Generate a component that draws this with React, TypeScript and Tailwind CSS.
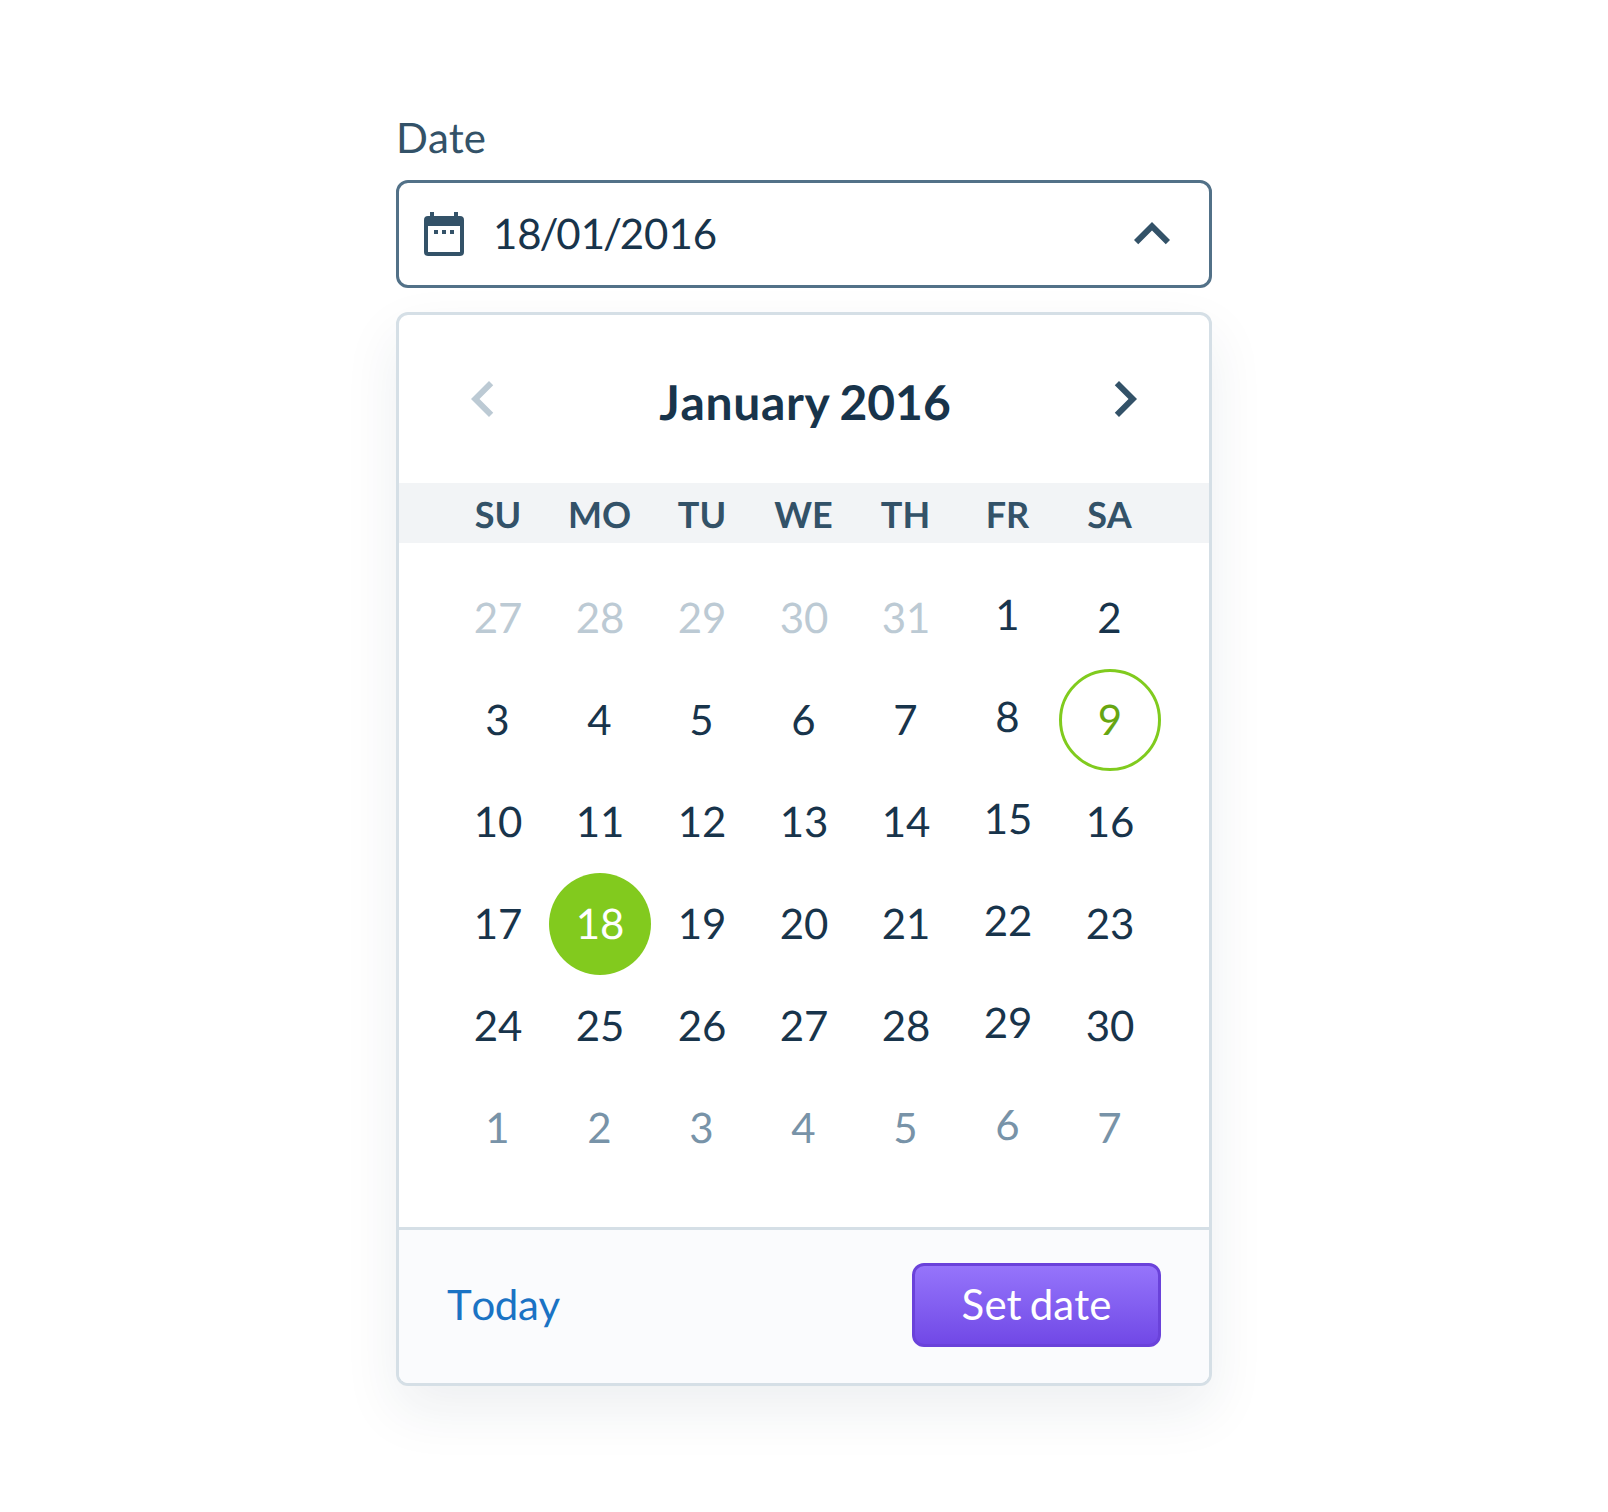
import React from "react";

const WEEKDAYS = ["SU", "MO", "TU", "WE", "TH", "FR", "SA"];

const WEEKS = [
  [27, 28, 29, 30, 31, 1, 2],
  [3, 4, 5, 6, 7, 8, 9],
  [10, 11, 12, 13, 14, 15, 16],
  [17, 18, 19, 20, 21, 22, 23],
  [24, 25, 26, 27, 28, 29, 30],
  [1, 2, 3, 4, 5, 6, 7],
];

function CalendarIcon() {
  return (
    <svg width="40" height="44" viewBox="0 0 40 44" fill="#335268" className="block">
      <path d="M6 0h4v4h20V0h4v4h2a4 4 0 0 1 4 4v32a4 4 0 0 1-4 4H4a4 4 0 0 1-4-4V8a4 4 0 0 1 4-4h2zM4 14v26h32V14z" fillRule="evenodd" />
      <path d="M10 18h4v4h-4zM18 18h4v4h-4zM26 18h4v4h-4z" />
    </svg>
  );
}

const CHEVRONS = {
  up: "M7.41 15.41 12 10.83l4.59 4.58L18 14l-6-6-6 6z",
  left: "M15.41 7.41 14 6l-6 6 6 6 1.41-1.41L10.83 12z",
  right: "M10 6 8.59 7.41 13.17 12l-4.58 4.59L10 18l6-6z",
};

function Chevron({ dir, className }: { dir: keyof typeof CHEVRONS; className: string }) {
  return (
    <svg viewBox="0 0 24 24" fill="currentColor" className={`block size-[72px] ${className}`}>
      <path d={CHEVRONS[dir]} />
    </svg>
  );
}

function dayClass(week: number, day: number) {
  if (week === 0 && day > 7) return "text-[#bccad4]";
  if (week === 5) return "text-[#7893a8]";
  if (day === 9) return "rounded-full border-3 border-[#80cb1e] text-[#67a611]";
  if (day === 18) return "rounded-full bg-[#82ca1e] text-white";
  return "text-[#18344b]";
}

function Slash() {
  return <span className="-mx-[2.2px]">/</span>;
}

export default function App() {
  return (
    <div className="flex h-[1512px] w-[1608px] flex-col items-center bg-white font-['Lato',sans-serif] text-[42px] leading-[50px] [font-kerning:none] [text-rendering:geometricPrecision]">
      <div className="w-[816px] pt-[112px]">
        <label className="block h-[68px] text-[#335268]">Date</label>
        <div className="flex h-[108px] items-center rounded-[12px] border-3 border-[#527188] bg-white pr-[21px] pl-[25px] text-[#18344b]">
          <CalendarIcon />
          <span className="ml-[29px] flex-1 pb-[2px]">
            18<Slash />01<Slash />2016
          </span>
          <Chevron dir="up" className="text-[#335268]" />
        </div>

        <div className="mt-6 h-[1074px] overflow-hidden rounded-[12px] border-3 border-[#d5dfe6] bg-white shadow-[0_24px_56px_rgba(24,52,75,0.08)]">
          <div className="flex h-[168px] items-center justify-between px-12">
            <Chevron dir="left" className="text-[#bccad4]" />
            <h2 className="pt-[8px] pl-[2px] text-[48px] leading-[60px] font-bold text-[#18344b] [word-spacing:-2.8px]">
              <span className="tracking-[0.65px]">January</span> 2016
            </h2>
            <Chevron dir="right" className="text-[#335268]" />
          </div>

          <div className="grid h-15 grid-cols-7 items-center bg-[#f2f4f6] px-12 pt-[2px] text-center text-[36px] leading-[58px] font-bold text-[#335268]">
            {WEEKDAYS.map((d) => (
              <span key={d} className={d === "SU" || d === "TU" ? "pr-0" : "pr-px"}>{d}</span>
            ))}
          </div>

          <div className="grid h-[684px] grid-cols-7 content-start px-12 pt-6">
            {WEEKS.map((week, w) =>
              week.map((day, c) => (
                <div key={`${w}-${c}`} className={`flex h-[102px] items-center justify-center ${dayClass(w, day)}`}>
                  <span className={`${c === 5 ? "pb-[8px]" : "pb-[2px]"} ${day < 9 ? "pr-px" : "pr-0"}`}>{day}</span>
                </div>
              )),
            )}
          </div>

          <div className="flex h-[156px] items-center justify-between border-t-3 border-[#d5dfe6] bg-[#fafbfd] px-12 pb-[3px]">
            <a className="pb-[2px] tracking-[-0.4px] text-[#1a73c4]">Today</a>
            <button className="h-[84px] w-[249px] rounded-[12px] border-3 border-[#6a42da] bg-linear-to-b from-[#9674fb] to-[#7148e6] pb-[2px] text-white [word-spacing:-2.6px]">
              Set date
            </button>
          </div>
        </div>
      </div>
    </div>
  );
}
